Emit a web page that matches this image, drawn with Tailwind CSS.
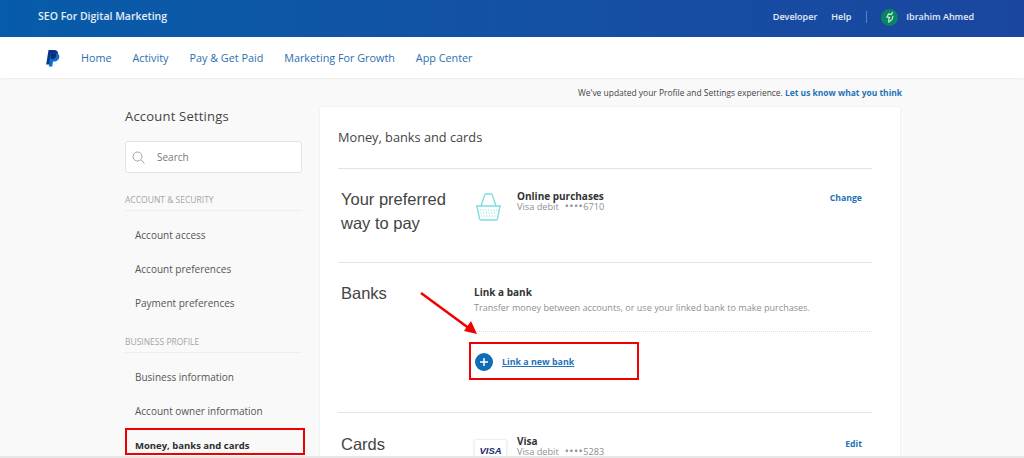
<!DOCTYPE html>
<html lang="en">
<head>
    <meta charset="UTF-8">
    <meta name="viewport" content="width=device-width, initial-scale=1.0">
    <title>Money, banks and cards</title>
    <script src="https://cdn.jsdelivr.net/npm/@tailwindcss/browser@4"></script>
</head>
<body class="relative h-[458px] overflow-hidden bg-[#f9f9f9] font-['Open_Sans',sans-serif] text-[#2c2e2f]">
    <!-- top bar -->
    <header class="h-[37px] bg-gradient-to-r from-[#065ca9] to-[#1a46a0] flex items-center justify-between pl-[38px] pr-[50px] pb-[3px] text-white/90">
        <span class="text-[10.5px] font-semibold">SEO For Digital Marketing</span>
        <div class="flex items-center text-[9px] font-semibold">
            <a class="mr-[14px]">Developer</a>
            <a>Help</a>
            <span class="w-px h-[12px] bg-white/30 ml-[15px] mr-[14px]"></span>
            <span class="w-[17px] h-[17px] rounded-full bg-[#0d8461] flex items-center justify-center mr-[8px]">
                <svg width="12" height="12" viewBox="0 0 12 12" fill="none" stroke="#b5ecd2" stroke-width="1.3"><path d="M8.500 1 L7.500 3.500 L4.500 3 L3 6 L5.500 6.500 L4.500 9 L5 11 L8 8.500 L9 5"/></svg>
            </span>
            <span>Ibrahim Ahmed</span>
        </div>
    </header>

    <!-- main nav -->
    <nav class="h-[41px] pt-[1px] bg-white shadow-[0_1px_2px_rgba(0,0,0,0.06)] flex items-center pl-[45px] text-[10.8px] text-[#2a6fb0]">
        <svg class="mr-[21px]" width="15" height="17" viewBox="0 0 15 17">
            <path fill="#0a3587" d="M3.500 0h5.500c3 0 4.500 1.800 4 4.500C12.500 7.500 10.500 9 8 9H6l-.9 5.500H1.200z"/>
            <path fill="#0f6fd0" d="M5.500 3.500h5.500c2.500 0 3.700 1.500 3.300 3.800C13.800 9.800 12 11.500 9.500 11.500H8L7.300 16.500H3.800z"/>
            <path fill="#082a6e" d="M5.500 3.500h5.500c.8 2.500-1 5.500-3 5.500H6z"/>
        </svg>
        <a class="mr-[21px]">Home</a>
        <a class="mr-[21px]">Activity</a>
        <a class="mr-[21px]">Pay &amp; Get Paid</a>
        <a class="mr-[21px]">Marketing For Growth</a>
        <a>App Center</a>
    </nav>

    <p class="h-[28px] pt-[2px] pr-[122px] flex items-center justify-end text-[8.45px] text-[#444]">
        We've updated your Profile and Settings experience.&nbsp;<a class="font-bold text-[#1f73b7]">Let us know what you think</a>
    </p>

    <div class="flex pl-[125px] h-[352px] overflow-hidden">
        <!-- sidebar -->
        <aside class="w-[177px] mr-[18px] shrink-0">
            <h2 class="text-[13px] leading-[20px] text-[#444] tracking-[0.2px]">Account Settings</h2>
            <div class="mt-[15px] h-[32px] bg-white border border-[#dfe3e6] rounded-[3px] flex items-center pl-[6px]">
                <svg class="mr-[12px]" width="13" height="13" viewBox="0 0 13 13" fill="none" stroke="#9da3a6"><circle cx="5.500" cy="5.500" r="4.500"/><path d="M9 9l3.500 3.500"/></svg>
                <span class="text-[10px] text-[#777]">Search</span>
            </div>
            <h3 class="mt-[21px] text-[8.5px] leading-[12px] text-[#a0a5a8]">ACCOUNT &amp; SECURITY</h3>
            <div class="mt-[4px] border-t border-[#eeeeee]"></div>
            <ul class="pl-[10px] text-[10px] text-[#555]">
                <li class="h-[34px] mt-[7px] flex items-center">Account access</li>
                <li class="h-[34px] flex items-center">Account preferences</li>
                <li class="h-[34px] flex items-center">Payment preferences</li>
            </ul>
            <h3 class="mt-[15.5px] text-[8.5px] leading-[12px] text-[#a0a5a8]">BUSINESS PROFILE</h3>
            <div class="mt-[4.5px] border-t border-[#eeeeee]"></div>
            <ul class="pl-[10px] text-[10px] text-[#555]">
                <li class="h-[34px] mt-[7px] flex items-center">Business information</li>
                <li class="h-[34px] flex items-center">Account owner information</li>
                <li class="h-[34px] mt-[1px] flex items-center text-[9.5px] font-bold text-[#2c2e2f]">Money, banks and cards</li>
            </ul>
        </aside>

        <!-- content card -->
        <main class="w-[582px] -ml-px bg-white rounded-t-[3px] border border-[#f2f2f2] pl-[18px] pr-[28px]">
            <h1 class="h-[61px] flex items-center text-[12.75px] text-[#444]">Money, banks and cards</h1>

            <section class="h-[94px] border-t border-[#e4e4e4] flex">
                <h2 class="w-[136px] pl-[3px] pt-[18px] font-['Liberation_Sans',sans-serif] text-[16.5px] leading-[24px] text-[#444]">Your preferred<br>way to pay</h2>
                <svg class="mt-[24px] ml-[1px] mr-[16px]" width="26" height="28" viewBox="0 0 26 28" fill="none" stroke="#7edbe0" stroke-width="1.3" stroke-linejoin="round">
                    <path d="M1 13h25M2 13l2.500 12.500c.2.800.8 1.500 1.500 1.500h15c.7 0 1.300-.7 1.500-1.500L25 13M6 13L9.500 2.500C9.800 1.500 10.500 1 11 1h5c.5 0 1.200.5 1.500 1.500L21 13"/>
                    <path stroke-width="1.100" stroke-dasharray="1 1.700" d="M5 17h17M5.500 20h16M6 23h15"/>
                </svg>
                <div class="pt-[22px] leading-[10px]">
                    <div class="text-[10px] font-bold text-[#333]">Online purchases</div>
                    <div class="text-[9.2px] text-[#8f8f8f]">Visa debit<span class="ml-[6px] text-[11px] tracking-[0.5px]">••••</span>6710</div>
                </div>
                <a class="ml-auto mr-[10px] mt-[23px] text-[8.7px] font-bold text-[#1f73b7]">Change</a>
            </section>

            <section class="h-[150px] border-t border-[#e4e4e4] flex">
                <h2 class="w-[136px] pl-[3px] pt-[18px] font-['Liberation_Sans',sans-serif] text-[16.5px] leading-[25px] text-[#444]">Banks</h2>
                <div class="flex-1">
                    <div class="h-[69px] border-b border-dotted border-[#ddd] pt-[23px]">
                        <div class="text-[10px] leading-[13px] font-bold text-[#333]">Link a bank</div>
                        <div class="mt-[1px] text-[9.1px] leading-[16px] text-[#8f8f8f]">Transfer money between accounts, or use your linked bank to make purchases.</div>
                    </div>
                    <div class="flex items-center pl-[1px] pt-[21px]">
                        <span class="w-[18px] h-[18px] rounded-full bg-[#0f6cb6] mr-[9px] flex items-center justify-center">
                            <svg width="10" height="10" viewBox="0 0 10 10" stroke="#fff" stroke-width="1.500"><path d="M5 1v8M1 5h8"/></svg>
                        </span>
                        <a class="text-[8.9px] font-bold text-[#1f73b7] underline">Link a new bank</a>
                    </div>
                </div>
            </section>

            <section class="border-t border-[#e4e4e4] flex">
                <h2 class="w-[136px] pl-[3px] pt-[19px] font-['Liberation_Sans',sans-serif] text-[16.5px] leading-[25px] text-[#444]">Cards</h2>
                <span class="mt-[26px] mr-[10px] w-[33px] h-[24px] border border-[#eee] shadow-sm rounded-[2px] flex items-center justify-center font-['Liberation_Sans',sans-serif] text-[9.5px] font-bold italic text-[#1a2b6d]">VISA</span>
                <div class="pt-[23px] leading-[10px]">
                    <div class="text-[10px] font-bold text-[#333]">Visa</div>
                    <div class="text-[9.2px] text-[#8f8f8f]">Visa debit<span class="ml-[6px] text-[11px] tracking-[0.5px]">••••</span>5283</div>
                </div>
                <a class="ml-auto mr-[10px] mt-[25px] text-[8.7px] font-bold text-[#1f73b7]">Edit</a>
            </section>
        </main>
    </div>

    <!-- red annotations drawn over the screenshot -->
    <div class="absolute left-[125px] top-[428px] w-[180px] h-[27px] border-[2.5px] border-[#f00000]"></div>
    <div class="absolute left-[469px] top-[342px] w-[170px] h-[38px] border-[2.5px] border-[#f00000]"></div>
    <svg class="absolute left-[415px] top-[288px]" width="70" height="50" viewBox="0 0 70 50">
        <path d="M6 5L55 41" stroke="#f00000" stroke-width="2.5"/>
        <path d="M62 46L49 43L56 33z" fill="#f00000"/>
    </svg>
    <div class="absolute left-0 right-0 bottom-0 h-[2px] bg-[#e6e6e6]"></div>
</body>
</html>
